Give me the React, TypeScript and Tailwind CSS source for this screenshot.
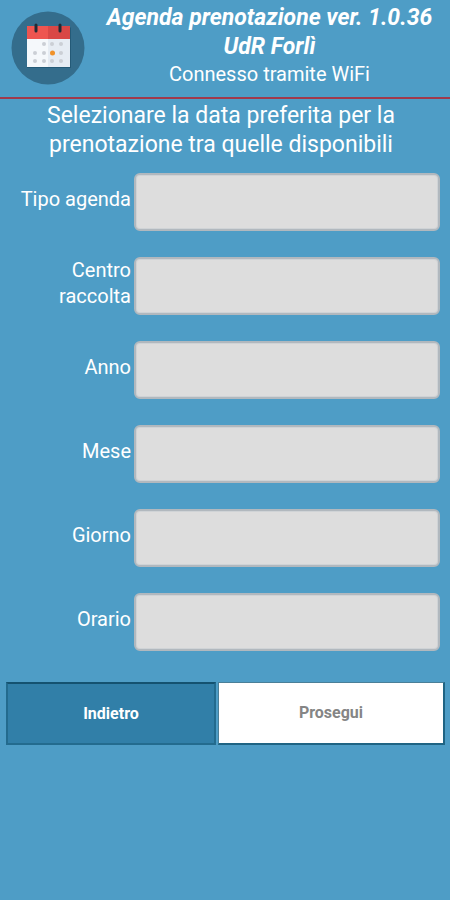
import React from "react";

function CalendarLogo() {
  const dots: [number, number][] = [
    [44, 44], [52, 44], [61, 44],
    [35, 53], [44, 53], [61, 53],
    [35, 61], [44, 61], [52, 61], [61, 61],
  ];
  return (
    <svg viewBox="11 11 74 74" className="h-[74px] w-[74px] shrink-0" role="img" aria-label="Agenda">
      <circle cx="48" cy="48" r="36.5" fill="#346d8c" />
      <path d="M27 66h43V27l1 1v40H27z" fill="#245a77" />
      <path d="M27 38h43v29H27z" fill="#f5f8fb" />
      <path d="M48 38h22v29H48z" fill="#e6ecf3" />
      <path d="M27 26h43v13H27z" fill="#ee5550" />
      <path d="M48 26h22v13H48z" fill="#d94846" />
      <path d="M36 25v6M60 25v6" stroke="#222b35" strokeWidth="3" strokeLinecap="round" />
      {dots.map(([x, y]) => (
        <circle key={`${x}-${y}`} cx={x} cy={y} r="2" fill="#cbcfd5" />
      ))}
      <circle cx="52.5" cy="53" r="2.5" fill="#f0922a" />
    </svg>
  );
}

const fields = [
  { id: "tipo", label: "Tipo agenda" },
  { id: "centro", label: "Centro raccolta" },
  { id: "anno", label: "Anno" },
  { id: "mese", label: "Mese" },
  { id: "giorno", label: "Giorno" },
  { id: "orario", label: "Orario" },
];

export default function App() {
  return (
    <main className="min-h-screen bg-[#4e9dc6] font-['Roboto',sans-serif] text-white">
      <header className="flex items-start border-b-2 border-[#a03a4c] pt-[3px] pb-[10px] pl-[11px]">
        <div className="pt-2">
          <CalendarLogo />
        </div>
        <div className="flex-1 pl-1 text-center">
          <h1 className="text-[23px] leading-[29px] font-bold italic">
            Agenda prenotazione ver. 1.0.36
            <br />
            UdR Forlì
          </h1>
          <p className="text-[20px] leading-[26px]">Connesso tramite WiFi</p>
        </div>
      </header>

      <form onSubmit={(e) => e.preventDefault()}>
        <h2 className="pt-[2px] pr-12 pl-10 text-center text-[23px] leading-[29px]">
          Selezionare la data preferita per la prenotazione tra quelle disponibili
        </h2>

        <div className="mt-[14px] flex flex-col gap-[26px] pr-[10px]">
          {fields.map((f) => (
            <div key={f.id} className="flex items-center">
              <label htmlFor={f.id} className="w-[134px] shrink-0 pr-[3px] pb-[6px] pl-4 text-right text-[20px] leading-[26px]">
                {f.label}
              </label>
              <select
                id={f.id}
                className="h-[58px] min-w-0 flex-1 appearance-none rounded-md border-2 border-[#b1b8be] bg-[#dddddd] px-3 text-[20px] text-gray-700 ring-1 ring-[#cfd3d6] ring-inset"
              />
            </div>
          ))}
        </div>

        <div className="mt-[31px] flex gap-[2px] pr-[5px] pl-[6px]">
          <button type="button" className="h-[63px] w-[210px] border-2 border-[#236b8e] border-t-[#145270] bg-[#317fa8] text-[16px] font-bold">
            Indietro
          </button>
          <button type="submit" className="h-[63px] flex-1 border border-r-2 border-b-2 border-[#4a7f98] border-r-[#1f6484] border-b-[#1f6484] bg-white text-[16px] font-bold text-[#858585]">
            Prosegui
          </button>
        </div>
      </form>
    </main>
  );
}
